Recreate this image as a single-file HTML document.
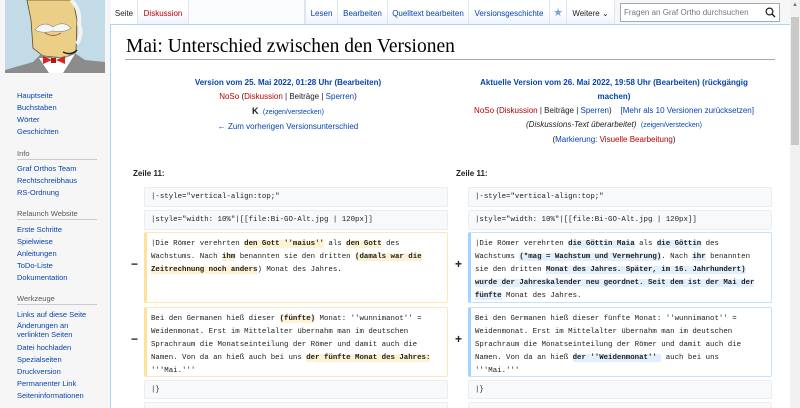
<!DOCTYPE html>
<html><head><meta charset="utf-8"><style>
*{margin:0;padding:0;box-sizing:border-box}
html{width:800px;height:408px;overflow:hidden}
body{width:800px;height:408px;overflow:hidden;background:#f6f6f6;font-family:"Liberation Sans",sans-serif;position:relative}
a{color:#0645ad;text-decoration:none}
.abs{position:absolute;white-space:nowrap}
#side{position:absolute;left:0;top:0;width:110px;height:408px}
#side .h{color:#54595d;font-size:7.5px}
#side .l{color:#0645ad;font-size:7.5px}
#side .sep{position:absolute;left:17px;width:80px;height:1px;background:#c8ccd1}
#content{position:absolute;left:110px;top:24px;width:680px;height:384px;background:#fff;border-left:1px solid #a7d7f9;border-top:1px solid #a7d7f9}
.tab{position:absolute;top:0;height:24px;font-size:8px;line-height:28px;text-align:center;background:linear-gradient(#fff 40%,#eef3fb);border-right:1px solid #dde6f0}
.red{color:#ba0000}.dk{color:#202122}
.hd{position:absolute;font-size:8px;text-align:center;line-height:14px;color:#202122}
.b{font-weight:bold}
.ctx,.del,.ins{position:absolute;font-family:"Liberation Mono",monospace;font-size:7.4px;line-height:13px;color:#202122;padding:5px 6px;border-radius:2px;white-space:pre;overflow:hidden}
.ctx{background:#f8f9fa;border:1px solid #eaecf0;padding:3px 6px}
.del{background:#fff;border:1px solid #fde9b8;border-left:3px solid #fde29b;padding-left:4px}
.ins{background:#fff;border:1px solid #c4e2fc;border-left:3px solid #a3d3ff;padding-left:4px}
.del span{background:#fef2d4;font-weight:bold}
.ins span{background:#e2f0fd;font-weight:bold}
.mk{position:absolute;font-size:12px;font-weight:bold;color:#202122}
</style></head><body>
<div id="side">
<svg class="abs" style="left:5px;top:0" width="100" height="73" viewBox="0 0 100 73">
<rect width="100" height="73" fill="#c3dbe6"/>
<path d="M22 0 L68 0 L72 20 L71 52 L60 58 L38 56 L28 48 L26 20 Z" fill="#eccf86" stroke="#5a4a30" stroke-width=".8"/>
<path d="M66 0 Q76 10 74 24 Q78 34 72 44" fill="none" stroke="#f2f2f2" stroke-width="4"/>
<path d="M30 30 Q38 20 48 27 Q58 20 66 28 Q60 33 48 31 Q38 34 30 30Z" fill="#f6f6f6" stroke="#888" stroke-width=".6"/>
<path d="M40 33 Q48 38 56 33" fill="none" stroke="#a55" stroke-width="1"/>
<path d="M0 73 L0 70 L28 62 L36 54 L48 58 L62 56 L68 52 L80 60 L100 62 L100 73 Z" fill="#8c8c8c"/>
<path d="M34 58 L44 73 L58 73 L70 54 L60 58 L46 58Z" fill="#fff"/>
<path d="M38 56 L47 60 L38 64Z M60 56 L51 60 L60 64Z" fill="#d22"/>
<rect x="46" y="58" width="5" height="5" fill="#b11"/>
<path d="M58 52 Q66 56 72 50" fill="none" stroke="#222" stroke-width="1.5"/>
</svg>
<div class="abs l" style="left:17px;top:91px">Hauptseite</div>
<div class="abs l" style="left:17px;top:103px">Buchstaben</div>
<div class="abs l" style="left:17px;top:115px">Wörter</div>
<div class="abs l" style="left:17px;top:127px">Geschichten</div>
<div class="abs h" style="left:17px;top:149px">Info</div><div class="sep" style="top:159px"></div>
<div class="abs l" style="left:17px;top:164px">Graf Orthos Team</div>
<div class="abs l" style="left:17px;top:176px">Rechtschreibhaus</div>
<div class="abs l" style="left:17px;top:188px">RS-Ordnung</div>
<div class="abs h" style="left:17px;top:209px">Relaunch Website</div><div class="sep" style="top:219px"></div>
<div class="abs l" style="left:17px;top:225px">Erste Schritte</div>
<div class="abs l" style="left:17px;top:237px">Spielwiese</div>
<div class="abs l" style="left:17px;top:249px">Anleitungen</div>
<div class="abs l" style="left:17px;top:261px">ToDo-Liste</div>
<div class="abs l" style="left:17px;top:273px">Dokumentation</div>
<div class="abs h" style="left:17px;top:294px">Werkzeuge</div><div class="sep" style="top:304px"></div>
<div class="abs l" style="left:17px;top:310px">Links auf diese Seite</div>
<div class="abs l" style="left:17px;top:322px;line-height:8.5px">Änderungen an<br>verlinkten Seiten</div>
<div class="abs l" style="left:17px;top:343px">Datei hochladen</div>
<div class="abs l" style="left:17px;top:355px">Spezialseiten</div>
<div class="abs l" style="left:17px;top:367px">Druckversion</div>
<div class="abs l" style="left:17px;top:379px">Permanenter Link</div>
<div class="abs l" style="left:17px;top:391px">Seiteninformationen</div>
</div>
<div class="tab dk" style="left:111px;width:27px;background:#fff">Seite</div>
<div class="tab" style="left:138px;width:51px;color:#ba0000">Diskussion</div>
<div class="tab" style="left:189px;width:116px;background:#fbfcfe"></div>
<div class="tab" style="left:305px;width:33px;color:#0645ad;border-left:1px solid #dde6f0">Lesen</div>
<div class="tab" style="left:338px;width:50px;color:#0645ad">Bearbeiten</div>
<div class="tab" style="left:388px;width:81px;color:#0645ad">Quelltext bearbeiten</div>
<div class="tab" style="left:469px;width:81px;color:#0645ad">Versionsgeschichte</div>
<div class="tab" style="left:550px;width:17px;color:#7aa2d6;font-size:11px;line-height:26px">★</div>
<div class="tab dk" style="left:567px;width:48px">Weitere ⌄</div>
<div class="abs" style="left:620px;top:3px;width:160px;height:19px;border:1px solid #a2a9b1;background:#fff;font-size:8px;color:#72777d;line-height:17px;padding-left:3px">Fragen an Graf Ortho durchsuchen</div>
<svg class="abs" style="left:765px;top:7px" width="11" height="11" viewBox="0 0 11 11"><circle cx="4.5" cy="4.5" r="3.4" fill="none" stroke="#202122" stroke-width="1.2"/><path d="M7 7 L10 10" stroke="#202122" stroke-width="1.4"/></svg>
<div id="content"></div>
<div class="abs" style="left:126px;top:36px;font-family:'Liberation Serif',serif;font-size:19.5px;color:#000">Mai: Unterschied zwischen den Versionen</div>
<div class="abs" style="left:125px;top:59px;width:650px;height:1px;background:#a2a9b1"></div>
<div class="hd" style="left:150px;top:76px;width:276px">
<div class="b"><a>Version vom 25. Mai 2022, 01:28 Uhr</a> <a>(Bearbeiten)</a></div>
<div><a class="red">NoSo</a> (<a class="red">Diskussion</a> | <span class="dk">Beiträge</span> | <a>Sperren</a>)</div>
<div><b style="font-size:9px">K</b> &nbsp;<a style="font-size:7px">(zeigen/verstecken)</a></div>
<div><a>← Zum vorherigen Versionsunterschied</a></div>
</div>
<div class="hd" style="left:458px;top:76px;width:312px">
<div class="b"><a>Aktuelle Version vom 26. Mai 2022, 19:58 Uhr</a> <a>(Bearbeiten)</a> <a>(rückgängig</a></div>
<div class="b"><a>machen)</a></div>
<div><a class="red">NoSo</a> (<a class="red">Diskussion</a> | <span class="dk">Beiträge</span> | <a>Sperren</a>) &nbsp;&nbsp; <a>[Mehr als 10 Versionen zurücksetzen]</a></div>
<div><i>(Diskussions-Text überarbeitet)</i> &nbsp;<a style="font-size:7px">(zeigen/verstecken)</a></div>
<div>(<a>Markierung</a>: <a class="red">Visuelle Bearbeitung</a>)</div>
</div>
<div class="abs b" style="left:133px;top:169px;font-size:8px;color:#202122">Zeile 11:</div>
<div class="abs b" style="left:456px;top:169px;font-size:8px;color:#202122">Zeile 11:</div>
<div class="ctx" style="left:144px;top:187px;width:304px;height:20px">|-style="vertical-align:top;"</div>
<div class="ctx" style="left:468px;top:187px;width:304px;height:20px">|-style="vertical-align:top;"</div>
<div class="ctx" style="left:144px;top:210px;width:304px;height:20px">|style="width: 10%"|[[file:Bi-GO-Alt.jpg | 120px]]</div>
<div class="ctx" style="left:468px;top:210px;width:304px;height:20px">|style="width: 10%"|[[file:Bi-GO-Alt.jpg | 120px]]</div>
<div class="mk" style="left:131px;top:257px">−</div>
<div class="del" style="left:144px;top:232px;width:304px;height:71px">|Die Römer verehrten <span>den Gott ''maius''</span> als <span>den Gott</span> des
Wachstums. Nach <span>ihm</span> benannten sie den dritten <span>(damals war die</span>
<span>Zeitrechnung noch anders</span>) Monat des Jahres.</div>
<div class="mk" style="left:455px;top:257px">+</div>
<div class="ins" style="left:468px;top:232px;width:304px;height:71px">|Die Römer verehrten <span>die Göttin Maia</span> als <span>die Göttin</span> des
Wachstums <span>(*mag = Wachstum und Vermehrung)</span>. Nach <span>ihr</span> benannten
sie den dritten <span>Monat des Jahres. Später, im 16. Jahrhundert)</span>
<span>wurde der Jahreskalender neu geordnet. Seit dem ist der Mai der</span>
<span>fünfte</span> Monat des Jahres.</div>
<div class="mk" style="left:131px;top:332px">−</div>
<div class="del" style="left:144px;top:307px;width:304px;height:70px">Bei den Germanen hieß dieser <span>(fünfte)</span> Monat: ''wunnimanot'' =
Weidenmonat. Erst im Mittelalter übernahm man im deutschen
Sprachraum die Monatseinteilung der Römer und damit auch die
Namen. Von da an hieß auch bei uns <span>der fünfte Monat des Jahres:</span>
'''Mai.'''</div>
<div class="mk" style="left:455px;top:332px">+</div>
<div class="ins" style="left:468px;top:307px;width:304px;height:70px">Bei den Germanen hieß dieser fünfte Monat: ''wunnimanot'' =
Weidenmonat. Erst im Mittelalter übernahm man im deutschen
Sprachraum die Monatseinteilung der Römer und damit auch die
Namen. Von da an hieß <span>der ''Weidenmonat'' </span> auch bei uns
'''Mai.'''</div>
<div class="ctx" style="left:144px;top:380px;width:304px;height:19px">|}</div>
<div class="ctx" style="left:468px;top:380px;width:304px;height:19px">|}</div>
<div class="ctx" style="left:144px;top:402px;width:304px;height:6px"></div>
<div class="ctx" style="left:468px;top:402px;width:304px;height:6px"></div>
<div class="abs" style="left:790px;top:0;width:10px;height:408px;background:#f1f1f1"></div>
<div class="abs" style="left:791px;top:17px;width:8px;height:128px;background:#c8c8c8"></div>
<div class="abs" style="left:792px;top:2px;font-size:6px;color:#777">▲</div>
</body></html>
